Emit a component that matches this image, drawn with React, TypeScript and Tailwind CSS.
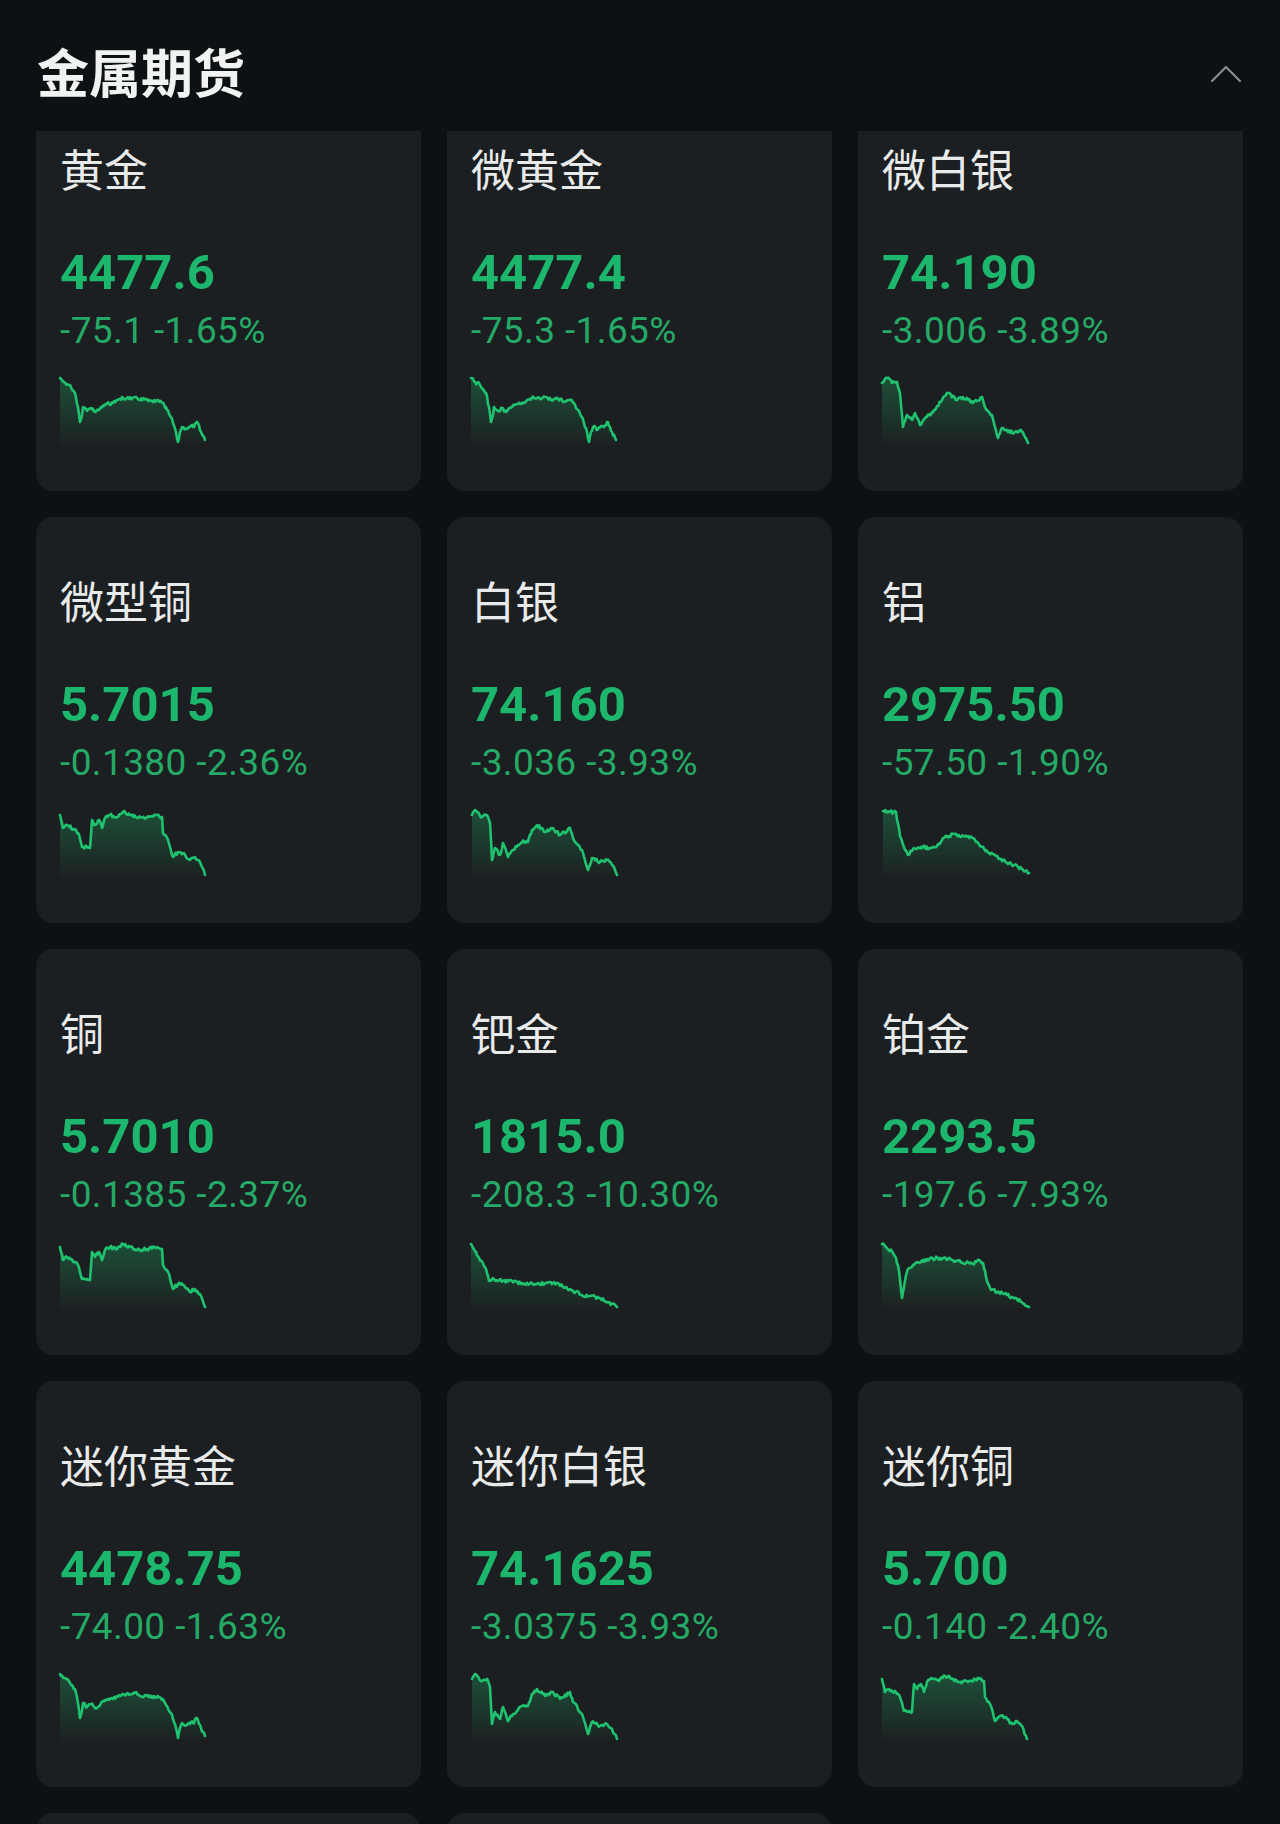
import React from "react";

type Pt = [number, number];

const GOLD: Pt[] = [[1,1],[5,5],[10,8],[16,16],[19,30],[21,45],[23,38],[24,30],[28,34],[32,31],[36,35],[42,30],[48,27],[54,26],[60,22],[64,21],[70,22],[76,20],[81,23],[88,22],[94,25],[99,23],[104,26],[108,33],[112,40],[114,46],[117,55],[119,65],[121,55],[123,50],[128,52],[132,49],[134,50],[138,45],[142,55],[146,63]];
const SILVER: Pt[] = [[2,6],[5,1],[12,8],[17,6],[20,14],[22,51],[25,39],[30,46],[33,34],[38,48],[43,41],[52,33],[58,33],[62,21],[67,16],[75,23],[82,19],[90,26],[100,19],[103,29],[112,41],[118,61],[122,49],[130,53],[137,51],[142,56],[147,66]];
const SILVER_MICRO: Pt[] = [[1,6],[6,1],[11,6],[16,5],[19,16],[22,50],[26,38],[31,43],[34,36],[39,48],[46,40],[54,33],[61,23],[67,16],[76,23],[82,20],[92,26],[101,20],[104,30],[111,38],[117,61],[121,51],[127,55],[134,55],[139,53],[143,58],[147,66]];
const COPPER: Pt[] = [[1,6],[4,19],[8,16],[16,21],[19,24],[23,38],[28,38],[31,39],[33,11],[36,16],[40,11],[43,19],[46,9],[51,6],[58,8],[64,3],[71,6],[78,9],[88,8],[98,6],[103,8],[104,24],[109,31],[114,48],[119,43],[124,44],[131,51],[136,48],[141,53],[146,66]];
const ALUMINUM: Pt[] = [[2,2],[8,3],[15,3],[19,27],[23,38],[27,46],[32,40],[40,38],[48,39],[56,37],[62,29],[68,27],[73,25],[80,28],[87,27],[94,31],[101,38],[108,44],[114,46],[120,50],[128,54],[137,58],[142,61],[148,64]];
const PALLADIUM: Pt[] = [[1,3],[5,10],[9,17],[16,28],[19,40],[24,38],[33,40],[42,40],[52,42],[65,43],[77,42],[89,43],[100,48],[112,54],[120,55],[129,57],[138,61],[147,66]];
const PLATINUM: Pt[] = [[1,3],[6,7],[11,10],[15,17],[18,30],[21,57],[24,40],[27,28],[32,24],[38,22],[46,18],[59,17],[67,18],[76,20],[85,22],[92,23],[96,20],[102,22],[106,40],[110,49],[118,51],[126,54],[136,58],[148,66]];

function rng(seed: number) {
  let a = seed >>> 0;
  return () => {
    a = (a + 0x6d2b79f5) >>> 0;
    let t = a;
    t = Math.imul(t ^ (t >>> 15), t | 1);
    t ^= t + Math.imul(t ^ (t >>> 7), t | 61);
    return ((t ^ (t >>> 14)) >>> 0) / 4294967296;
  };
}

function buildPoints(anchors: Pt[], seed: number): Pt[] {
  const r = rng(seed);
  const out: Pt[] = [];
  for (let i = 0; i < anchors.length - 1; i++) {
    const [x0, y0] = anchors[i];
    const [x1, y1] = anchors[i + 1];
    const steps = Math.max(1, Math.ceil(Math.abs(x1 - x0) / 1.3));
    for (let s = 0; s < steps; s++) {
      const t = s / steps;
      const x = x0 + (x1 - x0) * t;
      let y = y0 + (y1 - y0) * t;
      if (s > 0) y += (r() - 0.5) * 3.4;
      out.push([x, Math.max(0.5, Math.min(65.5, y))]);
    }
  }
  out.push(anchors[anchors.length - 1]);
  return out;
}

function Sparkline({ anchors, seed, id }: { anchors: Pt[]; seed: number; id: string }) {
  const pts = buildPoints(anchors, seed);
  const line = pts.map((p, i) => `${i === 0 ? "M" : "L"}${p[0].toFixed(1)},${p[1].toFixed(1)}`).join(" ");
  const first = pts[0];
  const last = pts[pts.length - 1];
  const area = `${line} L${last[0].toFixed(1)},67 L${first[0].toFixed(1)},67 Z`;
  return (
    <svg width="150" height="68" viewBox="0 0 150 68" className="block overflow-visible">
      <defs>
        <linearGradient id={id} x1="0" y1="0" x2="0" y2="1">
          <stop offset="0%" stopColor="#1fc06e" stopOpacity="0.3" />
          <stop offset="100%" stopColor="#1fc06e" stopOpacity="0.02" />
        </linearGradient>
      </defs>
      <path d={area} fill={`url(#${id})`} />
      <path d={line} fill="none" stroke="#1fc26f" strokeWidth="2.6" strokeLinejoin="round" strokeLinecap="round" />
    </svg>
  );
}

type Item = { name: string; price: string; change: string; chart: Pt[]; seed: number };

const items: Item[] = [
  { name: "黄金", price: "4477.6", change: "-75.1 -1.65%", chart: GOLD, seed: 11 },
  { name: "微黄金", price: "4477.4", change: "-75.3 -1.65%", chart: GOLD, seed: 12 },
  { name: "微白银", price: "74.190", change: "-3.006 -3.89%", chart: SILVER_MICRO, seed: 13 },
  { name: "微型铜", price: "5.7015", change: "-0.1380 -2.36%", chart: COPPER, seed: 14 },
  { name: "白银", price: "74.160", change: "-3.036 -3.93%", chart: SILVER, seed: 15 },
  { name: "铝", price: "2975.50", change: "-57.50 -1.90%", chart: ALUMINUM, seed: 16 },
  { name: "铜", price: "5.7010", change: "-0.1385 -2.37%", chart: COPPER, seed: 17 },
  { name: "钯金", price: "1815.0", change: "-208.3 -10.30%", chart: PALLADIUM, seed: 18 },
  { name: "铂金", price: "2293.5", change: "-197.6 -7.93%", chart: PLATINUM, seed: 19 },
  { name: "迷你黄金", price: "4478.75", change: "-74.00 -1.63%", chart: GOLD, seed: 20 },
  { name: "迷你白银", price: "74.1625", change: "-3.0375 -3.93%", chart: SILVER, seed: 21 },
  { name: "迷你铜", price: "5.700", change: "-0.140 -2.40%", chart: COPPER, seed: 22 },
];

function Card({ item, idx }: { item: Item; idx: number }) {
  return (
    <div className="h-[406px] rounded-[18px] bg-[#1c1f21] pl-[24px] pt-[61px] flex flex-col">
      <div
        className="text-[44px] leading-[44px] text-[#e9eaea] font-normal whitespace-nowrap"
        style={{ fontFamily: '"Noto Sans CJK SC", "Noto Sans", sans-serif' }}
      >
        {item.name}
      </div>
      <div
        className="mt-[58px] text-[49px] leading-[50px] font-bold text-[#1cb66c] whitespace-nowrap"
        style={{ fontFamily: 'Roboto, "Liberation Sans", sans-serif' }}
      >
        {item.price}
      </div>
      <div
        className="mt-[15px] text-[37px] leading-[36px] font-normal tracking-[0.4px] text-[#24aa66] whitespace-nowrap"
        style={{ fontFamily: 'Roboto, "Liberation Sans", sans-serif' }}
      >
        {item.change}
      </div>
      <div className="mt-[28px] -ml-[1px]">
        <Sparkline anchors={item.chart} seed={item.seed} id={`g${idx}`} />
      </div>
    </div>
  );
}

export default function App() {
  return (
    <div className="w-[1280px] h-[1824px] overflow-hidden bg-[#0e1113]">
      <div className="relative z-10 h-[131px] bg-[#0e1113] flex items-start justify-between pl-[37px] pr-[38px]">
        <div
          className="pt-[45px] text-[52px] leading-[52px] font-bold text-[#f1f2f2]"
          style={{ fontFamily: '"Noto Sans CJK SC", "Noto Sans", sans-serif' }}
        >
          金属期货
        </div>
        <svg width="32" height="20" viewBox="0 0 32 20" className="mt-[64px]">
          <path d="M2 17 L16 3 L30 17" fill="none" stroke="#8a8d90" strokeWidth="2.2" strokeLinecap="round" strokeLinejoin="round" />
        </svg>
      </div>
      <div className="-mt-[46px] grid grid-cols-3 gap-x-[26px] gap-y-[26px] pl-[36px] pr-[37px]">
        {items.map((it, i) => (
          <Card key={i} item={it} idx={i} />
        ))}
        <div className="h-[406px] rounded-[18px] bg-[#1c1f21]" />
        <div className="h-[406px] rounded-[18px] bg-[#1c1f21]" />
      </div>
    </div>
  );
}
